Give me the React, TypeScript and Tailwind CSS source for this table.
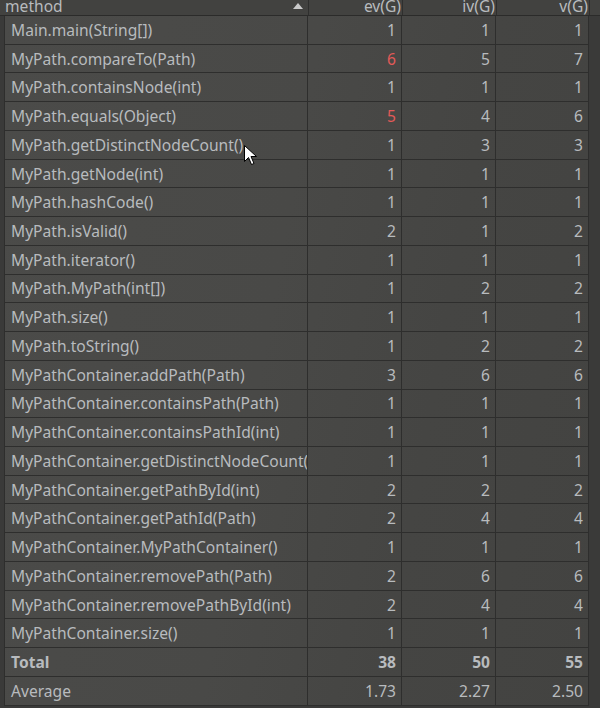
const rows: [string, number, number, number, boolean?][] = [
  ["Main.main(String[])", 1, 1, 1],
  ["MyPath.compareTo(Path)", 6, 5, 7, true],
  ["MyPath.containsNode(int)", 1, 1, 1],
  ["MyPath.equals(Object)", 5, 4, 6, true],
  ["MyPath.getDistinctNodeCount()", 1, 3, 3],
  ["MyPath.getNode(int)", 1, 1, 1],
  ["MyPath.hashCode()", 1, 1, 1],
  ["MyPath.isValid()", 2, 1, 2],
  ["MyPath.iterator()", 1, 1, 1],
  ["MyPath.MyPath(int[])", 1, 2, 2],
  ["MyPath.size()", 1, 1, 1],
  ["MyPath.toString()", 1, 2, 2],
  ["MyPathContainer.addPath(Path)", 3, 6, 6],
  ["MyPathContainer.containsPath(Path)", 1, 1, 1],
  ["MyPathContainer.containsPathId(int)", 1, 1, 1],
  ["MyPathContainer.getDistinctNodeCount()", 1, 1, 1],
  ["MyPathContainer.getPathById(int)", 2, 2, 2],
  ["MyPathContainer.getPathId(Path)", 2, 4, 4],
  ["MyPathContainer.MyPathContainer()", 1, 1, 1],
  ["MyPathContainer.removePath(Path)", 2, 6, 6],
  ["MyPathContainer.removePathById(int)", 2, 4, 4],
  ["MyPathContainer.size()", 1, 1, 1],
];

const font = "font-['Noto_Sans','Noto_Sans_CJK_SC',sans-serif]";

function Row({ name, cells, bold, red }: { name: string; cells: (string | number)[]; bold?: boolean; red?: boolean }) {
  return (
    <div className={`grid grid-cols-[303px_94px_94px_93px] h-[28.74px] border-b border-[#2e2e2d] ${bold ? "font-bold" : ""}`}>
      <div className="flex items-center pl-[6px] border-r border-[#2e2e2d] overflow-hidden whitespace-nowrap">
        <span className="leading-[20px]">{name}</span>
      </div>
      {cells.map((c, i) => (
        <div
          key={i}
          className={`flex items-center justify-end pr-[5px] border-r border-[#2e2e2d] ${red && i === 0 ? "text-[#e25a58]" : ""}`}
        >
          <span className="leading-[20px]">{c}</span>
        </div>
      ))}
    </div>
  );
}

export default function App() {
  return (
    <div className={`relative w-[600px] h-[708px] overflow-hidden bg-[#3a3a39] text-[15.6px] leading-none text-[#b8bbbe] ${font}`}>
      {/* header */}
      <div className="grid grid-cols-[309px_94px_94px_93px] h-[16px] border-b border-[#2b2b2a] bg-[#424240]">
        <div className="relative flex items-start pl-[5px] border-r border-[#2f2f2e] overflow-hidden">
          <span className="-mt-[3px] leading-[18px]">method</span>
          <svg className="absolute right-[5px] top-[3px]" width="10" height="6" viewBox="0 0 10 6">
            <path d="M0 6 L5 0 L10 6 Z" fill="#c9c9c9" />
          </svg>
        </div>
        {["ev(G)", "iv(G)", "v(G)"].map((h) => (
          <div key={h} className="flex items-start justify-end pr-px border-r border-[#2f2f2e] overflow-hidden">
            <span className="-mt-[3px] leading-[18px]">{h}</span>
          </div>
        ))}
      </div>

      {/* body */}
      <div className="flex">
        <div className="w-[4px] shrink-0" />
        <div className="border-l border-[#2e2e2d] bg-[linear-gradient(100deg,#4b4b49_0%,#494947_45%,#454543_70%,#434341_100%)]">
          {rows.map(([n, a, b, c, red]) => (
            <Row key={n} name={n} cells={[a, b, c]} red={red} />
          ))}
          <Row name="Total" cells={[38, 50, 55]} bold />
          <Row name="Average" cells={["1.73", "2.27", "2.50"]} />
        </div>
      </div>

      {/* mouse cursor */}
      <svg className="absolute left-[244px] top-[145px]" width="14" height="22" viewBox="0 0 14 22">
        <path
          d="M0.5 0.5 L0.5 16.5 L4.5 12.5 L7.5 19.5 L10 18.5 L7 11.5 L12.5 11.5 Z"
          fill="#ffffff"
          stroke="#000000"
          strokeWidth="1"
          strokeLinejoin="miter"
        />
      </svg>
    </div>
  );
}
